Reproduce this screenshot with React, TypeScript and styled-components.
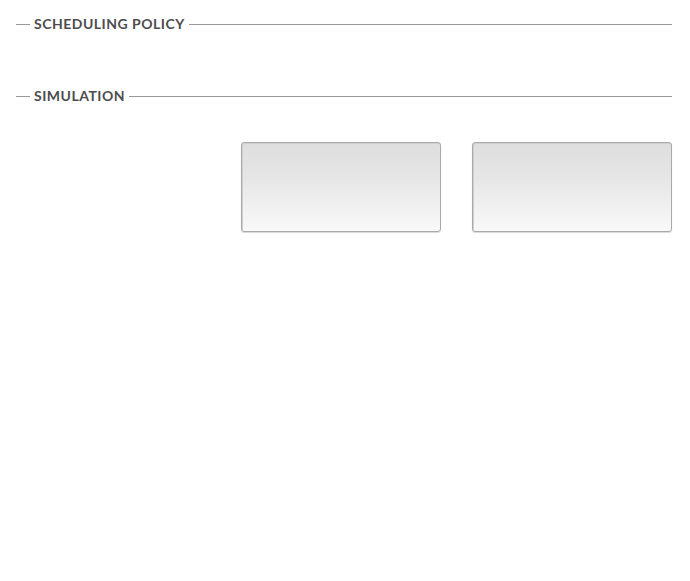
import React from "react";
import styled, { createGlobalStyle } from "styled-components";

const Global = createGlobalStyle`
  html, body { margin: 0; padding: 0; background: #ffffff; }
  body { font-family: Lato, "Open Sans", sans-serif; }
`;

const Page = styled.div`
  width: 690px;
  height: 581px;
  box-sizing: border-box;
  padding: 15px 18px 0 16px;
  display: flex;
  flex-direction: column;
`;

const Section = styled.section<{ $height: number }>`
  display: flex;
  flex-direction: column;
  min-height: ${(p) => p.$height}px;
`;

const Heading = styled.div`
  display: flex;
  align-items: center;
  height: 18px;
  gap: 4px;
  &::before {
    content: "";
    width: 14px;
    height: 1px;
    background: #999;
  }
  &::after {
    content: "";
    flex: 1;
    height: 1px;
    background: #999;
  }
`;

const Title = styled.h2`
  margin: 0;
  font-family: Lato, "Open Sans", sans-serif;
  font-weight: 700;
  font-size: 14px;
  letter-spacing: 0.5px;
  color: #4d4d4d;
  line-height: 18px;
`;

const Row = styled.div`
  display: flex;
  justify-content: flex-end;
  gap: 31px;
  margin-top: 37px;
`;

const Panel = styled.div`
  width: 200px;
  height: 90px;
  box-sizing: border-box;
  border: 1px solid #a9a9a9;
  border-radius: 3px;
  background: linear-gradient(to bottom, #dedede 0%, #e6e6e6 40%, #f9f9f9 100%);
  box-shadow: inset 1px 1px 0 #cfcfcf, 0 1px 1px rgba(0, 0, 0, 0.15);
`;

export default function App() {
  return (
    <>
      <Global />
      <Page>
        <Section $height={72}>
          <Heading>
            <Title>SCHEDULING POLICY</Title>
          </Heading>
        </Section>
        <Section $height={100}>
          <Heading>
            <Title>SIMULATION</Title>
          </Heading>
          <Row>
            <Panel />
            <Panel />
          </Row>
        </Section>
      </Page>
    </>
  );
}
